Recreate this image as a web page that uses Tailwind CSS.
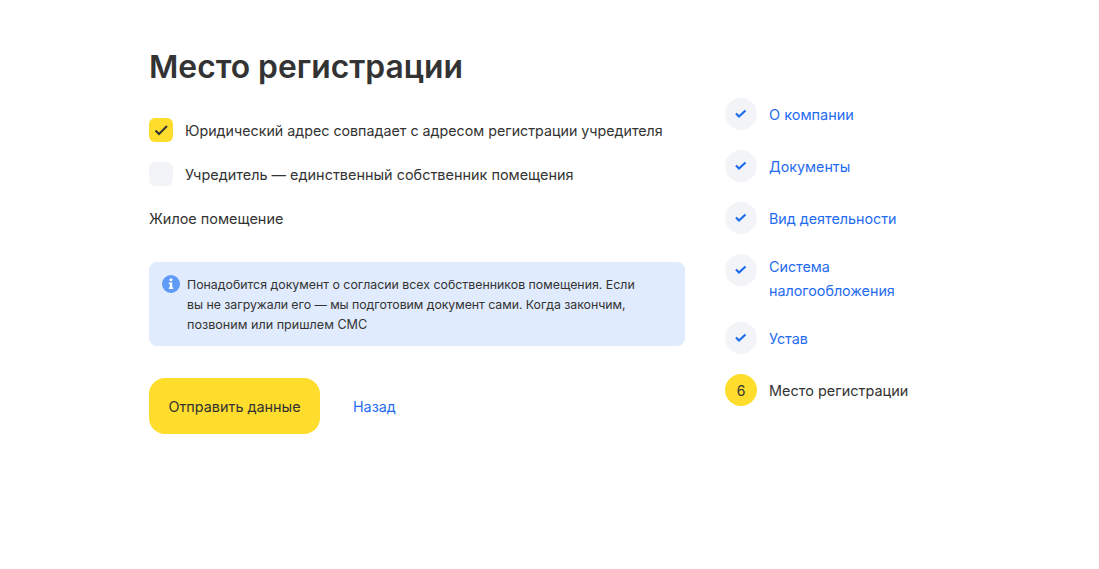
<!DOCTYPE html>
<html lang="ru">
<head>
  <meta charset="UTF-8" />
  <title>Место регистрации</title>
  <script src="https://cdn.jsdelivr.net/npm/@tailwindcss/browser@4"></script>
</head>
<body class="bg-white text-[#333] font-['Inter',sans-serif] h-[569px] overflow-hidden">
  <div class="flex pl-[149px] pt-[45px]">
    <main class="w-[536px]">
      <h1 class="text-[31.8px] leading-[44px] font-semibold">Место регистрации</h1>
      <div class="mt-[29px] flex items-center gap-3 h-6">
        <span class="w-6 h-6 rounded-md bg-[#ffdd2d] flex items-center justify-center">
          <svg width="16" height="16" viewBox="0 0 16 16" fill="none"><path d="M2.500 8.500l3.500 3.500 8-8" stroke="#333" stroke-width="2"/></svg>
        </span>
        <span class="text-[14.25px] pt-0.5">Юридический адрес совпадает с адресом регистрации учредителя</span>
      </div>
      <div class="mt-5 flex items-center gap-3 h-6">
        <span class="w-6 h-6 rounded-md bg-[#f3f4f7]"></span>
        <span class="text-[14.45px] pt-0.5">Учредитель — единственный собственник помещения</span>
      </div>
      <p class="mt-[21px] text-[14.45px] leading-6">Жилое помещение</p>
      <div class="mt-[31px] bg-[#e0ebfd] rounded-lg h-[84px] flex gap-[7px] pl-[13px] pt-[13px]">
        <svg class="shrink-0" width="18" height="18" viewBox="0 0 18 18"><circle cx="9" cy="9" r="9" fill="#5f9bf6"/><circle cx="9" cy="4.800" r="1.500" fill="#fff"/><path d="M6.800 7.500h3.400v5h1v1.500H6.800v-1.500h1v-3.500h-1z" fill="#fff"/></svg>
        <p class="text-[12.35px] leading-5 whitespace-nowrap">Понадобится документ о согласии всех собственников помещения. Если<br><span class="tracking-[-0.05px]">вы не загружали его — мы подготовим документ сами. Когда закончим,</span><br><span class="text-[12.6px]">позвоним или пришлем СМС</span></p>
      </div>
      <div class="mt-8 flex items-center gap-[33px]">
        <button class="h-14 w-[171px] pt-0.5 rounded-2xl bg-[#ffdd2d] text-[14.4px]">Отправить данные</button>
        <a class="text-[14.3px] pt-0.5 text-[#1f6cf0]">Назад</a>
      </div>
    </main>
    <aside class="ml-10 mt-[53px] w-[190px] flex flex-col gap-5 text-[14.3px]">
      <div class="flex gap-3"><span class="w-8 h-8 shrink-0 rounded-full bg-[#f3f4f7] flex items-center justify-center"><svg width="12" height="12" viewBox="0 0 12 12" fill="none"><path d="M1 5.500l3 3 6.500-6" stroke="#1f6cf0" stroke-width="2.200"/></svg></span><a class="text-[#1f6cf0] text-[14.5px] leading-6 pt-[5px]">О компании</a></div>
      <div class="flex gap-3"><span class="w-8 h-8 shrink-0 rounded-full bg-[#f3f4f7] flex items-center justify-center"><svg width="12" height="12" viewBox="0 0 12 12" fill="none"><path d="M1 5.500l3 3 6.500-6" stroke="#1f6cf0" stroke-width="2.200"/></svg></span><a class="text-[#1f6cf0] leading-6 pt-[5px]">Документы</a></div>
      <div class="flex gap-3"><span class="w-8 h-8 shrink-0 rounded-full bg-[#f3f4f7] flex items-center justify-center"><svg width="12" height="12" viewBox="0 0 12 12" fill="none"><path d="M1 5.500l3 3 6.500-6" stroke="#1f6cf0" stroke-width="2.200"/></svg></span><a class="text-[#1f6cf0] leading-6 pt-[5px]">Вид деятельности</a></div>
      <div class="flex gap-3"><span class="w-8 h-8 shrink-0 rounded-full bg-[#f3f4f7] flex items-center justify-center"><svg width="12" height="12" viewBox="0 0 12 12" fill="none"><path d="M1 5.500l3 3 6.500-6" stroke="#1f6cf0" stroke-width="2.200"/></svg></span><a class="text-[#1f6cf0] leading-6 pt-px">Система<br>налогообложения</a></div>
      <div class="flex gap-3 -mt-px"><span class="w-8 h-8 shrink-0 rounded-full bg-[#f3f4f7] flex items-center justify-center"><svg width="12" height="12" viewBox="0 0 12 12" fill="none"><path d="M1 5.500l3 3 6.500-6" stroke="#1f6cf0" stroke-width="2.200"/></svg></span><a class="text-[#1f6cf0] leading-6 pt-[5px]">Устав</a></div>
      <div class="flex gap-3"><span class="w-8 h-8 shrink-0 rounded-full bg-[#ffdd2d] flex items-center justify-center text-[14px]">6</span><span class="text-[14.45px] leading-6 pt-[5px]">Место регистрации</span></div>
    </aside>
  </div>
</body>
</html>
